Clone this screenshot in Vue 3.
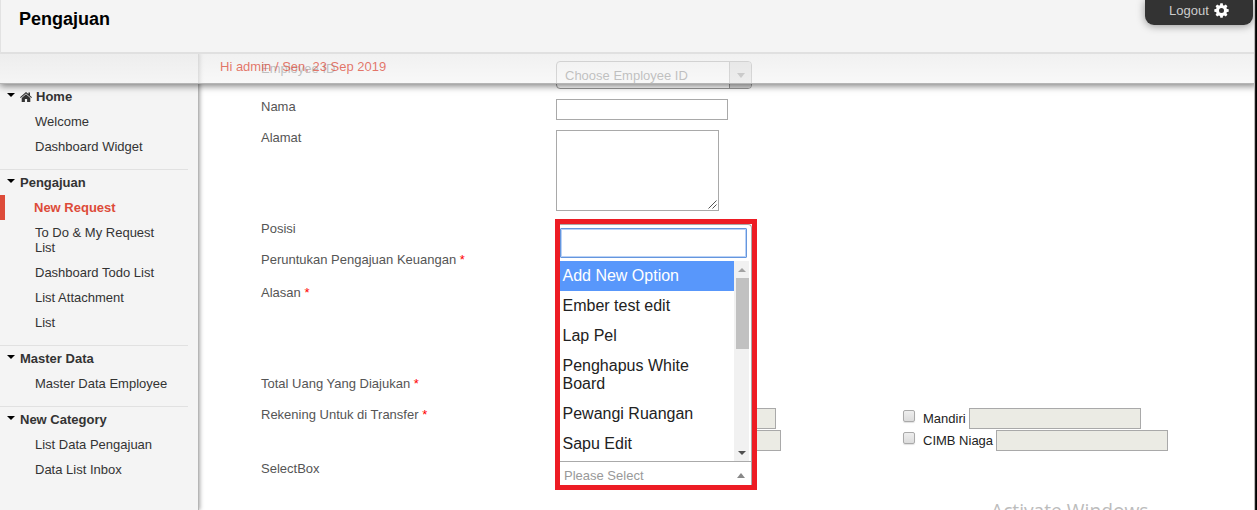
<script setup>
const menu = [
  { title: 'Home', icon: true, items: [['Welcome'], ['Dashboard Widget']] },
  {
    title: 'Pengajuan',
    items: [['New Request', true], ['To Do & My Request List'], ['Dashboard Todo List'], ['List Attachment'], ['List']],
  },
  { title: 'Master Data', items: [['Master Data Employee']] },
  { title: 'New Category', items: [['List Data Pengajuan'], ['Data List Inbox']] },
]
const options = ['Add New Option', 'Ember test edit', 'Lap Pel', 'Penghapus White Board', 'Pewangi Ruangan', 'Sapu Edit']
const gearTeeth = [0, 45, 90, 135, 180, 225, 270, 315]
</script>

<template>
  <div class="page">
    <header class="header">
      <h1>Pengajuan</h1>
      <a class="logout">
        <span>Logout</span>
        <svg width="15" height="15" viewBox="0 0 15 15">
          <g fill="#fff">
            <path v-for="a in gearTeeth" :key="a" d="M5.8 3 L6.3 0.3 H8.7 L9.2 3 Z" :transform="`rotate(${a} 7.5 7.5)`" />
          </g>
          <circle cx="7.5" cy="7.5" r="4" fill="none" stroke="#fff" stroke-width="3" />
        </svg>
      </a>
    </header>
    <div class="infobar">Hi admin / Sen, 23 Sep 2019</div>

    <div class="body">
      <nav class="sidebar">
        <section v-for="group in menu" :key="group.title">
          <h2>
            <svg class="caret" width="8" height="4" viewBox="0 0 8 4"><path d="M0 0H8L4 4Z" /></svg>
            <svg v-if="group.icon" class="home" width="12" height="10" viewBox="0 0 12 10">
              <path d="M6 0 L8.4 2.1 V0.6 H10 V3.5 L12 5.3 L11.3 6 L6 1.5 L0.7 6 L0 5.3 Z M6 2.2 L10.3 5.9 V10 H7.1 V7 H4.9 V10 H1.7 V5.9 Z" fill="#333" />
            </svg>
            {{ group.title }}
          </h2>
          <a v-for="[label, active] in group.items" :key="label" :class="{ active }">{{ label }}</a>
        </section>
      </nav>

      <main class="form">
        <div class="row employee">
          <label>Employee ID</label>
          <div class="select"><span>Choose Employee ID</span><b><svg width="8" height="5" viewBox="0 0 8 5"><path d="M0 0H8L4 5Z" fill="#777" /></svg></b></div>
        </div>
        <div class="row"><label>Nama</label><div class="input"></div></div>
        <div class="row tall">
          <label>Alamat</label>
          <div class="textarea">
            <svg width="9" height="9" viewBox="0 0 9 9"><path d="M0.5 8.5L8.5 0.5M4.5 8.5L8.5 4.5" stroke="#555" fill="none" /></svg>
          </div>
        </div>
        <div class="row"><label>Posisi</label></div>
        <div class="row purpose"><label>Peruntukan Pengajuan Keuangan <i>*</i></label></div>
        <div class="row tall"><label>Alasan <i>*</i></label></div>
        <div class="row"><label>Total Uang Yang Diajukan <i>*</i></label></div>
        <div class="row banks">
          <label>Rekening Untuk di Transfer <i>*</i></label>
          <div class="bankgrid">
            <div class="bank first"><div class="input off"></div></div>
            <div class="bank"><u></u><span>Mandiri</span><div class="input off"></div></div>
            <div class="bank second"><div class="input off"></div></div>
            <div class="bank"><u></u><span>CIMB Niaga</span><div class="input off"></div></div>
          </div>
        </div>
        <div class="row"><label>SelectBox</label></div>
      </main>
    </div>

    <div class="popup">
      <div class="panel">
        <div class="search"></div>
        <div class="list">
          <ul>
            <li v-for="(o, i) in options" :key="o" :class="{ on: i === 0 }">{{ o }}</li>
          </ul>
          <div class="scroll">
            <svg width="8" height="4" viewBox="0 0 8 4"><path d="M0 4H8L4 0Z" fill="#a3a3a3" /></svg>
            <div class="thumb"></div>
            <svg class="down" width="8" height="4" viewBox="0 0 8 4"><path d="M0 0H8L4 4Z" fill="#505050" /></svg>
          </div>
        </div>
        <div class="current"><span>Please Select</span><svg width="8" height="5" viewBox="0 0 8 5"><path d="M0 5H8L4 0Z" fill="#888" /></svg></div>
      </div>
    </div>
    <div class="watermark">Activate Windows</div>
    <div class="edge"></div>
  </div>
</template>

<style>
body { margin: 0; background: #fff; }
</style>

<style scoped>
* { box-sizing: border-box; }
.page { position: relative; width: 1257px; height: 510px; overflow: hidden; font: 13px/15px "Liberation Sans", Arial, sans-serif; color: #333; background: #fff; }
.header { position: relative; z-index: 3; height: 54px; background: #f4f4f4; border-left: 1px solid #e2e2e2; border-bottom: 2px solid #e0e0e0; display: flex; justify-content: space-between; align-items: flex-start; padding: 0 4px 0 18px; }
h1 { margin: 8px 0 0; font-size: 18px; line-height: 22px; color: #000; }
.logout { display: flex; align-items: center; gap: 5px; width: 108px; height: 25px; padding: 0 0 4px 24px; background: #333; color: #ccc; border-radius: 0 0 9px 9px; box-shadow: 0 1px 8px rgba(0, 0, 0, .4); }
.infobar { position: relative; z-index: 2; height: 30px; padding: 5px 0 0 220px; color: rgba(221, 75, 57, .75); background: linear-gradient(rgba(234, 234, 234, .68), rgba(245, 245, 245, .68)); border-bottom: 1px solid #b5b5b5; box-shadow: 0 2px 7px rgba(0, 0, 0, .5); }
.body { display: flex; margin-top: -31px; height: 457px; }
.sidebar { width: 199px; padding: 31px 10px 0 0; background: #f4f4f4; border-right: 1px solid #b5b5b5; box-shadow: 1px 0 4px rgba(0, 0, 0, .35); }
section { padding-bottom: 10px; border-bottom: 1px solid #e1e1e1; }
section:last-child { border: 0; }
h2 { display: flex; align-items: center; margin: 0; height: 25px; font-size: 13px; padding-left: 7px; }
.caret { margin: -4px 5px 0 0; }
.home { margin: 1px 4px 0 0; }
.sidebar section a { display: block; padding: 5px 15px 5px 35px; }
.sidebar section a.active { padding-left: 29px; border-left: 5px solid #dd4b39; color: #dd4b39; font-weight: bold; }
.form { padding: 8px 0 0 62px; flex: 1; color: #555; }
.row { display: flex; height: 31px; }
.row label { width: 295px; flex: none; white-space: nowrap; }
.row i { color: #f00; font-style: normal; }
.employee { height: 38px; }
.tall { height: 91px; }
.purpose { height: 33px; }
.banks { height: 54px; }
.select { display: flex; width: 196px; height: 28px; border: 1px solid #999; border-radius: 4px; color: #555; }
.select span { flex: 1; padding: 6px 8px; }
.select b { width: 22px; border-left: 1px solid #999; background: #ddd; border-radius: 0 3px 3px 0; display: flex; align-items: center; justify-content: center; }
.input { width: 172px; height: 21px; border: 1px solid #a9a9a9; background: #fff; }
.off { background: #ebebe4; }
.textarea { width: 163px; height: 81px; border: 1px solid #a9a9a9; display: flex; justify-content: flex-end; align-items: flex-end; padding: 1px; }
.bankgrid { display: grid; grid-template-columns: 347px 270px; grid-auto-rows: 22px; padding-top: 1px; }
.bank { display: flex; color: #222; }
.first { padding-left: 48px; }
.second { padding-left: 53px; }
.bank u { width: 12px; height: 12px; margin: 2px 8px 0 0; border: 1px solid #aaa; border-radius: 2px; background: linear-gradient(#eee, #dcdcdc); box-shadow: 0 1px 1px rgba(0, 0, 0, .12); flex: none; }
.bank span { margin: 3px 3px 0 0; }
.popup { position: absolute; left: 555px; top: 219px; width: 202px; height: 271px; z-index: 4; border: 5px solid #ed1c24; background: #fff; }
.panel { height: 261px; border: 1px solid #aaa; border-width: 1px 1px 0 0; border-radius: 0 4px 0 0; }
.search { width: 187px; height: 30px; margin: 3px 0 3px; border: 1px solid #6596dd; box-shadow: inset 0 0 0 1px #b9d2f7; border-radius: 1px; }
.list { display: flex; height: 200px; width: 189px; }
ul { list-style: none; margin: 0; padding: 0; width: 174px; font-size: 16px; line-height: 18px; color: #222; }
li { padding: 6px 20px 6px 2.5px; }
.on { background: #5897fb; color: #fff; }
.scroll { width: 15px; background: #f1f1f1; display: flex; flex-direction: column; align-items: flex-end; padding: 7px 0 6px; }
.scroll svg { margin-right: 3px; }
.thumb { width: 13px; height: 71px; margin-top: 6px; background: #c1c1c1; }
.scroll .down { margin-top: auto; }
.current { display: flex; align-items: center; justify-content: space-between; height: 24px; border-top: 1px solid #aaa; color: #999; padding: 4px 6px 0 4px; }
.watermark { position: absolute; left: 991px; top: 497px; font: 19.2px/27px "Open Sans", "Noto Sans", sans-serif; color: #bcbcbc; white-space: nowrap; }
.edge { position: absolute; z-index: 5; right: 0; top: 0; bottom: 0; width: 3px; background: linear-gradient(90deg, #bbb 1px, #222 1px, #111 2px, #000 2px); }
</style>
